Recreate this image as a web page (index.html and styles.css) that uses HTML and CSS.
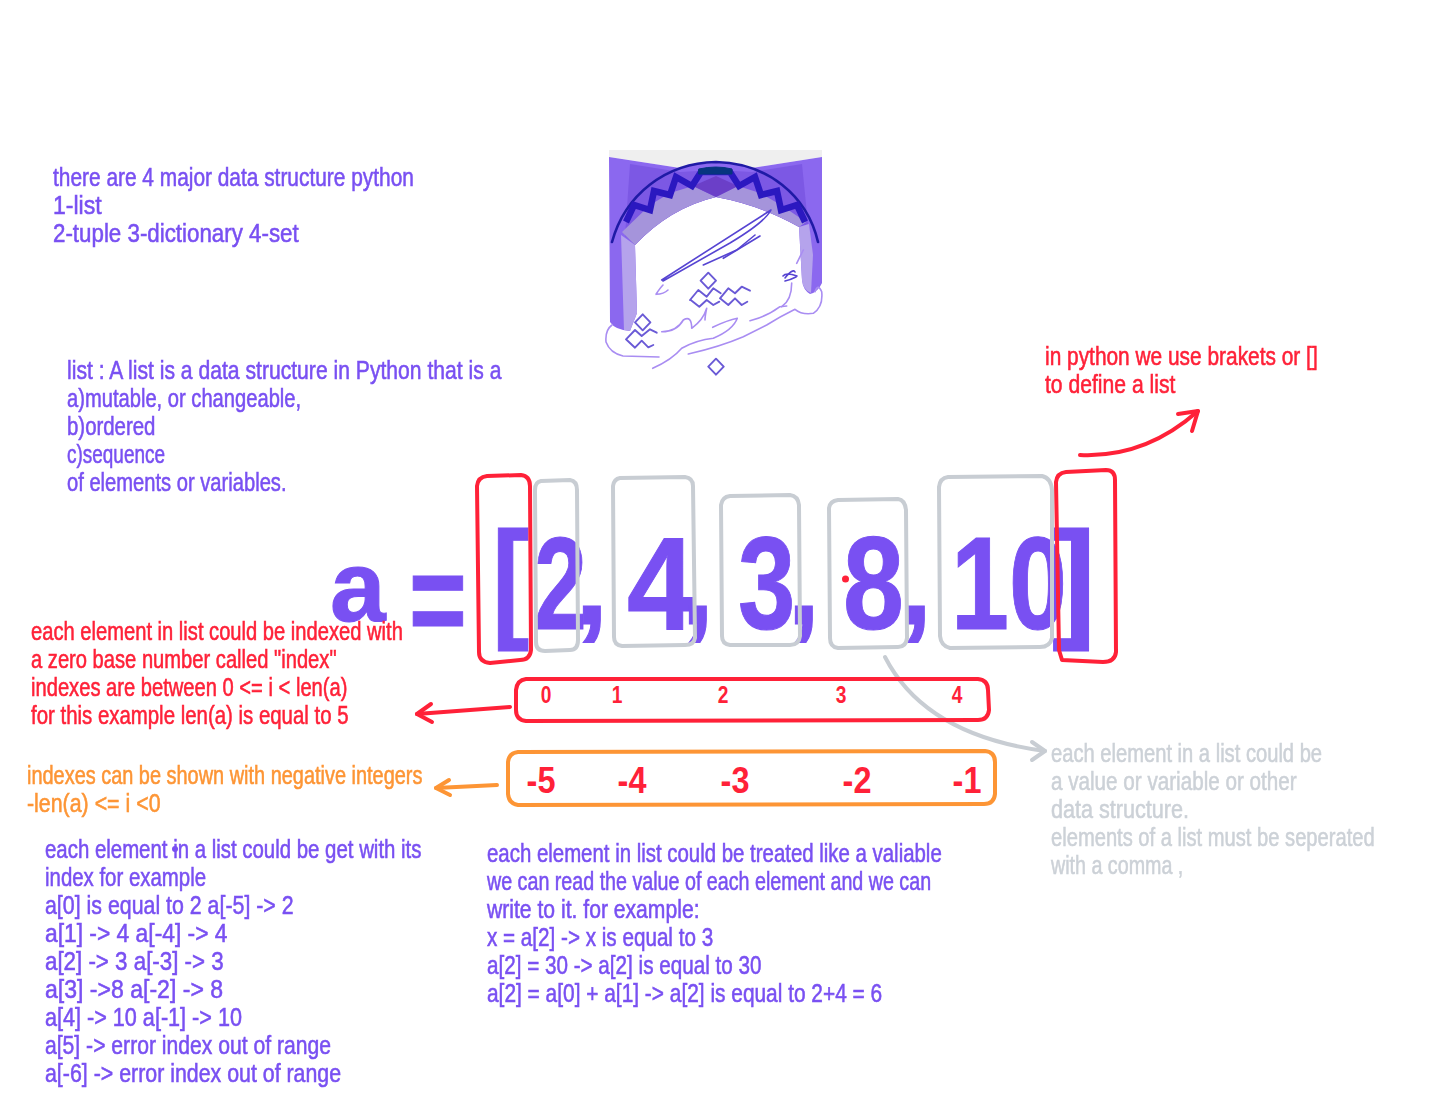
FILE: index.html
```html
<!DOCTYPE html>
<html lang="en">
<head>
<meta charset="utf-8">
<title>Python list</title>
<link rel="stylesheet" href="styles.css">
</head>
<body>
<main class="canvas">
  <svg class="logo" viewBox="590 140 250 250" aria-hidden="true">
    <path class="l-grey" d="M609 150H822V157L752 168H680L609 157Z"/>
    <path class="l-wall" d="M609 157L680 168Q716 158 752 168L822 157V283Q818 292 810 294Q803 290 802 280L799 227Q760 205 716 197Q670 208 635 245L637 313L630 331Q615 330 610 322Z"/>
    <path class="l-inner" d="M630 164L680 172L716 170L752 172L802 164L808 224L799 227Q760 205 716 197Q670 208 635 245L625 236Z"/>
    <path class="l-soffit" d="M635 245Q670 208 716 197Q760 205 799 227L806 222L781 205L760 193L738 186L716 197L693 186L670 193L650 205L622 232Z"/>
    <path class="l-center" d="M693 186L716 176L738 186L716 197Z"/>
    <path class="l-pale" d="M621 235L635 245L637 313L630 331L624 330Z"/>
    <path class="l-pale" d="M799 227L809 224L813 255L811 293Q803 290 802 280Z"/>
    <path class="l-ring" d="M612 242C625 195 665 163 716 162C767 163 807 195 818 242"/>
    <path class="l-key" d="M626 222L634 205L650 210L654 191L670 195L676 177L692 186L701 172H730L739 186L755 177L761 195L777 191L781 210L797 205L805 222"/>
    <path class="l-cap" d="M699 169Q716 165 732 169V174H699Z"/>
    <g class="l-dark">
      <path d="M661.700 280L771 210Q765 222 730 243L663 281"/>
      <path d="M703.300 265L736.700 250L755 235"/>
      <path d="M723.300 258.300L760 236"/>
      <path d="M785 278Q793 268 795 272M783 276Q786 272 797 276M785 281Q790 280 796 277"/>
    </g>
    <g class="l-line">
      <path d="M708.300 272.700L716 280.700L708.300 288.700L700.600 280.700Z"/>
      <path d="M642.700 314.300L650.400 322.300L642.700 330.300L635 322.300Z"/>
      <path d="M716 358.700L723.700 366.700L716 374.700L708.300 366.700Z"/>
      <path d="M690 300L698.300 290L706.700 296.700L713.300 288.300L720.700 293.300M690.700 300L699.300 306.700L706.700 300L713.300 305L719.300 301.700"/>
      <path d="M720 298.300L728.300 288.300L735 293.300L741.700 286.700L750 290.700M720 298.300L728.300 305L735 298.300L741.700 305L747.300 301.700"/>
      <path d="M626 339.300L635 330L641.700 336L650 329.300L656.700 332.700M626 339.300L635 347.700L641.700 340.700L648.300 347.300L653.300 345"/>
    </g>
    <g class="l-light">
      <path d="M612 325Q605 330 606 342Q610 353 623 356L659 357"/>
      <path d="M652.700 368.300Q671.700 360 681.700 348.300Q696.700 340 713.300 338.300Q733 330 737.300 318.300Q728 320 712.700 327.300"/>
      <path d="M688.300 354Q720 346.700 743.300 336.700Q756.700 330 766.700 325Q780 316.700 795 309.300Q801.700 315 813.300 313.300Q823.300 306.700 821.700 291.700Q818 283 815 291.700"/>
      <path d="M661.700 331.700Q676.700 331.700 683.300 320Q691.700 315 691.700 328.300Q703.300 320 706.700 308.300Q705 316 705 320"/>
      <path d="M750 320.700Q766.700 316.700 780 306.700L786.700 306"/>
      <path d="M791.700 283Q791.700 300 781.700 306.700"/>
      <path d="M656 294.300Q660 288 663 285M656 294.300Q664 294 668 290"/>
      <path d="M796.700 263.300L803.300 250"/>
    </g>
  </svg>

  <span class="big g-a">a</span>
  <span class="big g-eq">=</span>
  <span class="big g-open">[</span>
  <span class="big g-2">2</span>
  <span class="big comma g-c1">,</span>
  <span class="big g-4">4</span>
  <span class="big comma g-c2">,</span>
  <span class="big g-3">3</span>
  <span class="big comma g-c3">,</span>
  <span class="big g-8">8</span>
  <span class="big comma g-c4">,</span>
  <span class="big g-10">10</span>
  <span class="big g-close">]</span>

  <div class="note violet n-types"><p class="w87">there are 4 major data structure python</p><p class="w96">1-list</p><p class="w93">2-tuple 3-dictionary 4-set</p></div>
  <div class="note violet n-list"><p class="w88">list : A list is a data structure in Python that is a</p><p class="w84">a)mutable, or changeable,</p><p class="w85">b)ordered</p><p class="w79">c)sequence</p><p class="w84">of elements or variables.</p></div>
  <div class="note red n-brackets"><p class="w87">in python we use brakets or []</p><p class="w88">to define a list</p></div>
  <div class="note red n-index"><p class="w84">each element in list could be indexed with</p><p class="w84">a zero base number called "index"</p><p class="w84">indexes are between 0 &lt;= i &lt; len(a)</p><p class="w85">for this example len(a) is equal to 5</p></div>
  <div class="note orange n-negative"><p class="w83">indexes can be shown with negative integers</p><p class="w89">-len(a) &lt;= i &lt;0</p></div>
  <div class="note grey n-element"><p class="w84">each element in a list could be</p><p class="w86">a value or variable or other</p><p class="w90">data structure.</p><p class="w84">elements of a list must be seperated</p><p class="w82">with a comma ,</p></div>
  <div class="note violet n-get"><p class="w85">each element in a list could be get with its</p><p class="w85">index for example</p><p class="w89">a[0] is equal to 2 a[-5] -&gt; 2</p><p class="w95">a[1] -&gt; 4 a[-4] -&gt; 4</p><p class="w93">a[2] -&gt; 3 a[-3] -&gt; 3</p><p class="w96">a[3] -&gt;8 a[-2] -&gt; 8</p><p class="w90">a[4] -&gt; 10 a[-1] -&gt; 10</p><p class="w88">a[5] -&gt; error index out of range</p><p class="w89">a[-6] -&gt; error index out of range</p></div>
  <div class="note violet n-variable"><p class="w85">each element in list could be treated like a valiable</p><p class="w82">we can read the value of each element and we can</p><p class="w88">write to it. for example:</p><p class="w86">x = a[2] -&gt; x is equal to 3</p><p class="w86">a[2] = 30 -&gt; a[2] is equal to 30</p><p class="w87">a[2] = a[0] + a[1] -&gt; a[2] is equal to 2+4 = 6</p></div>

  <span class="idx i0">0</span>
  <span class="idx i1">1</span>
  <span class="idx i2">2</span>
  <span class="idx i3">3</span>
  <span class="idx i4">4</span>
  <span class="neg m5">-5</span>
  <span class="neg m4">-4</span>
  <span class="neg m3">-3</span>
  <span class="neg m2">-2</span>
  <span class="neg m1">-1</span>

  <svg class="sketch" viewBox="0 0 1429 1112" aria-hidden="true">
    <g class="s-grey">
      <path d="M541 481L570 480Q577 481 577 490L578 640Q578 650 570 650L545 651Q536 651 536 642L535 490Q535 482 541 481Z"/>
      <path d="M620 478L685 477Q693 478 693 486L695 638Q694 645 685 645L622 646Q614 645 614 637L613 486Q614 479 620 478Z"/>
      <path d="M730 496L790 495Q798 496 799 505L800 636Q799 645 790 645L730 645Q722 644 722 636L721 505Q722 497 730 496Z"/>
      <path d="M838 500L898 499Q905 500 906 510L907 638Q906 647 898 647L838 648Q830 647 830 638L829 508Q830 501 838 500Z"/>
      <path d="M948 477L1042 476Q1051 478 1052 490L1052 638Q1050 647 1040 647L950 648Q941 646 940 636L939 487Q940 478 948 477Z"/>
      <path d="M885 657Q925 735 1045 751"/>
      <path d="M1032 742L1045 751L1032 760"/>
    </g>
    <g class="s-red">
      <path d="M487 476L521 475Q530 476 530 486L531 650Q530 660 520 660L490 663Q479 662 479 652L477 486Q478 477 487 476Z"/>
      <path d="M1066 472L1106 470Q1115 470 1115 480L1116 652Q1115 662 1103 662L1062 660L1059 650L1056 482Q1057 473 1066 472Z"/>
      <path d="M526 679L978 679Q988 680 988 690L989 710Q988 720 978 720L526 721Q516 720 516 710L516 690Q517 680 526 679Z"/>
      <path d="M1080 455Q1145 458 1198 411"/>
      <path d="M1178 414L1198 411L1192 431"/>
      <path d="M510 707L417 714"/>
      <path d="M431 704L417 714L432 722"/>
    </g>
    <g class="s-orange">
      <path d="M518 752L985 751Q995 752 995 762L995 794Q994 804 984 804L518 805Q509 804 508 794L508 762Q509 753 518 752Z"/>
      <path d="M497 785L436 788"/>
      <path d="M449 780L436 788L450 795"/>
    </g>
    <circle class="s-dot" cx="845.500" cy="579" r="3.500"/>
    <circle class="s-smudge" cx="175" cy="849" r="3"/>
  </svg>
</main>
</body>
</html>
```
FILE: styles.css
```css
html, body {
  margin: 0;
  background: #fff;
}
.canvas {
  position: relative;
  width: 1429px;
  height: 1112px;
  overflow: hidden;
  background: #fff;
}
.logo {
  position: absolute;
  left: 590px;
  top: 140px;
  width: 250px;
  height: 250px;
  filter: blur(0.4px);
}
.logo path { stroke-linejoin: round; stroke-linecap: round; }
.l-grey { fill: #efefef; }
.l-wall { fill: #8b68ef; }
.l-inner { fill: #7c58e4; }
.l-soffit { fill: #a594db; }
.l-center { fill: #6b3fc8; }
.l-pale { fill: #b5a3ec; }
.l-ring { fill: none; stroke: #1f1aa6; stroke-width: 2.600; }
.l-key { fill: none; stroke: #2b18c0; stroke-width: 6.500; }
.logo .l-key { stroke-linejoin: miter; stroke-linecap: butt; }
.l-cap { fill: #06357f; stroke: #06357f; stroke-width: 1; }
.l-dark path { fill: none; stroke: #5644d2; stroke-width: 1.600; }
.l-line path { fill: none; stroke: #6a5ad6; stroke-width: 1.900; }
.l-light path { fill: none; stroke: #a98df2; stroke-width: 1.600; }

.big {
  position: absolute;
  font-family: "Liberation Sans", sans-serif;
  font-weight: 700;
  font-size: 132px;
  line-height: 132px;
  color: #7950f2;
  -webkit-text-stroke: 1px currentColor;
  white-space: pre;
  transform-origin: left top;
}
.g-a { left: 330px; top: 536px; font-size: 100px; line-height: 100px; }
.g-eq { left: 409px; top: 534px; transform: scaleX(.75); }
.g-open { left: 492px; top: 513px; transform: scaleX(.85); }
.g-2 { left: 534px; top: 518px; transform: scaleX(.72); }
.g-4 { left: 627px; top: 518px; transform: scaleX(.92); }
.g-3 { left: 738px; top: 518px; transform: scaleX(.78); }
.g-8 { left: 843px; top: 518px; transform: scaleX(.83); }
.g-10 { left: 951px; top: 518px; transform: scaleX(.79); }
.g-close { left: 1052px; top: 513px; }
.big.comma { font-size: 120px; line-height: 120px; top: 522px; }
.g-c1 { left: 575px; }
.g-c2 { left: 681px; }
.g-c3 { left: 787px; }
.g-c4 { left: 899px; }

.note {
  position: absolute;
  font-family: "Liberation Sans", sans-serif;
  font-size: 25px;
  line-height: 28px;
  white-space: pre;
  -webkit-text-stroke: 0.55px currentColor;
}
.note p {
  margin: 0;
  transform-origin: left center;
}
.w79 { transform: scaleX(.758); }
.w82 { transform: scaleX(.787); }
.w83 { transform: scaleX(.797); }
.w84 { transform: scaleX(.806); }
.w85 { transform: scaleX(.816); }
.w86 { transform: scaleX(.826); }
.w87 { transform: scaleX(.835); }
.w88 { transform: scaleX(.845); }
.w89 { transform: scaleX(.854); }
.w90 { transform: scaleX(.864); }
.w93 { transform: scaleX(.893); }
.w95 { transform: scaleX(.912); }
.w96 { transform: scaleX(.922); }
.violet { color: #7950f2; }
.red { color: #ff2138; }
.orange { color: #fd9535; }
.grey { color: #ccd1d7; }
.n-types { left: 53px; top: 163px; }
.n-list { left: 67px; top: 356px; }
.n-brackets { left: 1045px; top: 342px; }
.n-index { left: 31px; top: 617px; }
.n-negative { left: 27px; top: 761px; }
.n-element { left: 1051px; top: 739px; }
.n-get { left: 45px; top: 835px; }
.n-variable { left: 487px; top: 839px; }

.idx, .neg {
  position: absolute;
  font-family: "Liberation Sans", sans-serif;
  color: #ff2138;
  font-weight: 700;
}
.idx { font-size: 24px; line-height: 28px; top: 681px; transform: translateX(-50%) scaleX(.8); }
.neg { font-size: 36px; line-height: 40px; top: 761px; transform: translateX(-50%) scaleX(.9); }
.i0 { left: 546px; }
.i1 { left: 617px; }
.i2 { left: 723px; }
.i3 { left: 841px; }
.i4 { left: 957px; }
.m5 { left: 541px; }
.m4 { left: 632px; }
.m3 { left: 735px; }
.m2 { left: 857px; }
.m1 { left: 967px; }

.sketch {
  position: absolute;
  left: 0;
  top: 0;
  width: 1429px;
  height: 1112px;
  pointer-events: none;
}
.sketch path { fill: none; stroke-linecap: round; stroke-linejoin: round; }
.s-grey path { stroke: #c8cdd3; stroke-width: 4; }
.s-red path { stroke: #ff2138; stroke-width: 4; }
.s-orange path { stroke: #fd9535; stroke-width: 4; }
.s-dot { fill: #ff2138; }
.s-smudge { fill: #7950f2; }
```
